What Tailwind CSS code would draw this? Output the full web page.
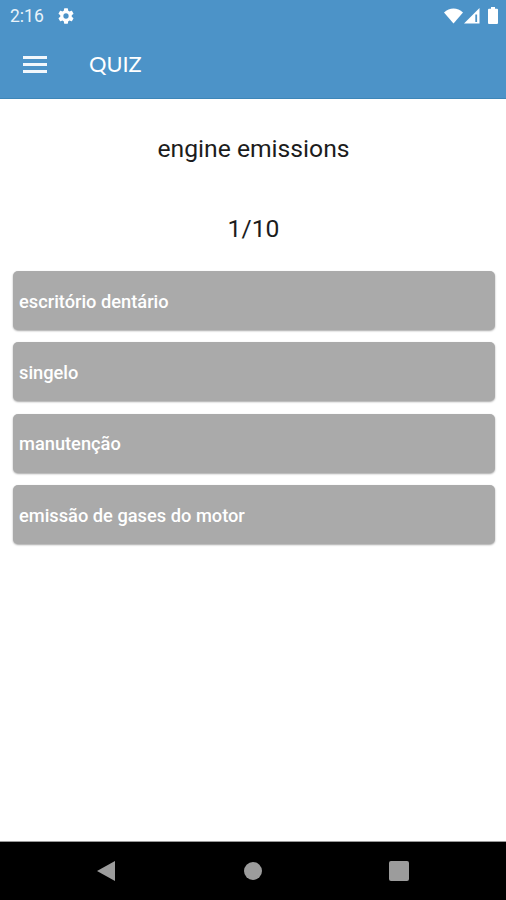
<!DOCTYPE html>
<html lang="pt">
<head>
  <meta charset="UTF-8">
  <meta name="viewport" content="width=device-width, initial-scale=1.0">
  <title>Quiz</title>
  <script src="https://cdn.jsdelivr.net/npm/@tailwindcss/browser@4"></script>
</head>
<body class="bg-white font-['Roboto',sans-serif]">
<div class="flex flex-col w-full h-[900px] overflow-hidden">

  <!-- Header -->
  <header class="h-[99px] shrink-0 bg-[#4c93c8] border-b border-[#3d86b8] text-white">
    <!-- Status bar -->
    <div class="flex items-center h-[31px] pl-[10px] pr-2">
      <span class="pt-px text-[17.5px] leading-8 w-[48px] text-[#e9f3fa]">2:16</span>
      <svg class="size-4" viewBox="2 2 20 20" fill="#fff">
        <path d="M19.14 12.94c.04-.3.06-.61.06-.94s-.02-.64-.07-.94l2.03-1.58a.49.49 0 0 0 .12-.61l-1.92-3.32a.49.49 0 0 0-.59-.22l-2.39.96a7 7 0 0 0-1.62-.94l-.36-2.54a.48.48 0 0 0-.48-.41h-3.84a.48.48 0 0 0-.47.41l-.36 2.54c-.59.24-1.13.57-1.62.94l-2.39-.96a.48.48 0 0 0-.59.22L2.74 8.87a.48.48 0 0 0 .12.61l2.03 1.58c-.05.3-.09.63-.09.94s.02.64.07.94l-2.03 1.58a.49.49 0 0 0-.12.61l1.92 3.32c.12.22.37.29.59.22l2.39-.96c.5.38 1.03.7 1.62.94l.36 2.54c.05.24.24.41.48.41h3.84c.24 0 .44-.17.47-.41l.36-2.54c.59-.24 1.13-.56 1.62-.94l2.39.96c.22.08.47 0 .59-.22l1.92-3.32a.48.48 0 0 0-.12-.61zM12 15.3a3.3 3.3 0 1 1 0-6.6 3.3 3.3 0 0 1 0 6.6z"/>
      </svg>
      <div class="flex items-center ml-auto">
        <svg class="w-[19px] h-4" viewBox="0 0 19 16" fill="#fff"><path d="M0 4.5C5.5-.8 13.5-.8 19 4.5L9.5 15.5z"/></svg>
        <svg class="w-4 h-4 ml-px" viewBox="0 0 16 16"><path d="M0 15.5L15.5 0V15.5z" fill="#fff"/><path d="M12.2 6.5v7.5" stroke="#4c93c8" stroke-width="1.8"/></svg>
        <svg class="w-[10px] h-[17px] ml-2" viewBox="0 0 10 17" fill="#fff"><path d="M3 0h4v1.7h2q1 0 1 1V16q0 1-1 1H1q-1 0-1-1V2.7q0-1 1-1h2z"/></svg>
      </div>
    </div>
    <!-- Toolbar -->
    <div class="flex items-center h-[67px] pl-[23px]">
      <button class="flex flex-col gap-1 w-6" aria-label="Menu">
        <span class="h-[3px] bg-[#f1f7fc]"></span>
        <span class="h-[3px] bg-[#f1f7fc]"></span>
        <span class="h-[3px] bg-[#f1f7fc]"></span>
      </button>
      <h1 class="ml-[42px] pb-[2px] text-[21.8px] leading-8 font-['Lato',sans-serif]">QUIZ</h1>
    </div>
  </header>

  <!-- Question -->
  <main class="grow px-3 text-[#1c1c1c]">
    <p class="mt-[34px] pl-px text-center text-[24.7px] leading-8">engine emissions</p>
    <p class="mt-12 pl-px text-center text-[24.7px] leading-8">1/10</p>

    <div class="mt-[26px] ml-[0.5px] -mr-[0.5px] flex flex-col gap-[12.3px] text-white text-[18.25px] font-medium">
      <button class="h-[59px] px-[6.5px] pt-[2px] text-left rounded-[5px] bg-[#aaa] shadow-[0_1px_2px_rgba(0,0,0,0.35)]">escritório dentário</button>
      <button class="h-[59px] px-[6.5px] pt-px text-left rounded-[5px] bg-[#aaa] shadow-[0_1px_2px_rgba(0,0,0,0.35)]">singelo</button>
      <button class="h-[59px] px-[6.5px] pt-[2px] text-left rounded-[5px] bg-[#aaa] shadow-[0_1px_2px_rgba(0,0,0,0.35)]">manutenção</button>
      <button class="h-[59px] px-[6.5px] pt-[2px] text-left rounded-[5px] bg-[#aaa] shadow-[0_1px_2px_rgba(0,0,0,0.35)]">emissão de gases do motor</button>
    </div>
  </main>

  <!-- Android navigation -->
  <nav class="flex items-center justify-between h-[59px] shrink-0 bg-black border-t border-[#999] px-[97px]">
    <svg class="w-[18px] h-5" viewBox="0 0 18 20" fill="#9c9c9c"><path d="M0 10L18 0V20z"/></svg>
    <span class="size-[18px] ml-[2px] rounded-full bg-[#9c9c9c]"></span>
    <span class="size-5 rounded-[2px] bg-[#9c9c9c]"></span>
  </nav>
</div>
</body>
</html>
